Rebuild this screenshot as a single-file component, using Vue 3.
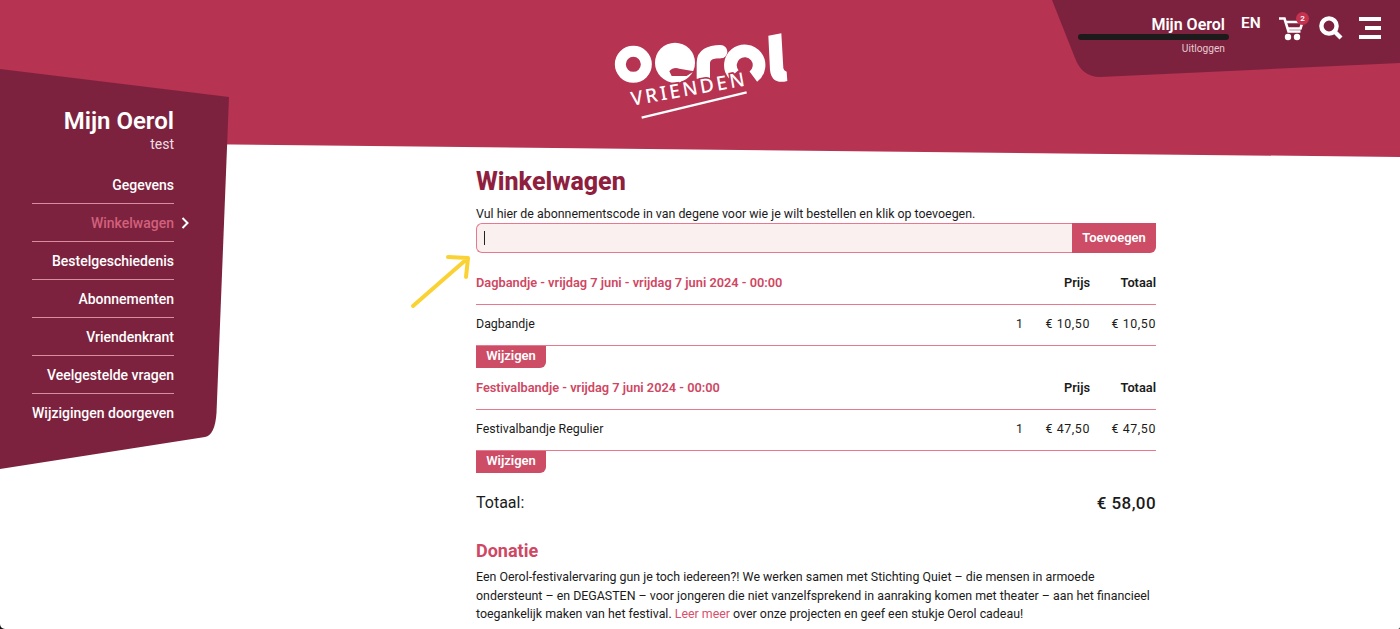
<script setup>
const menu = [
  { label: 'Gegevens' },
  { label: 'Winkelwagen', active: true },
  { label: 'Bestelgeschiedenis' },
  { label: 'Abonnementen' },
  { label: 'Vriendenkrant' },
  { label: 'Veelgestelde vragen' },
  { label: 'Wijzigingen doorgeven' },
]
const groups = [
  { title: 'Dagbandje - vrijdag 7 juni - vrijdag 7 juni 2024 - 00:00', name: 'Dagbandje', qty: 1, price: '€ 10,50', total: '€ 10,50' },
  { title: 'Festivalbandje - vrijdag 7 juni 2024 - 00:00', name: 'Festivalbandje Regulier', qty: 1, price: '€ 47,50', total: '€ 47,50' },
]
</script>

<template>
  <div class="page">
    <svg class="bg" width="1400" height="629" viewBox="0 0 1400 629" aria-hidden="true">
      <path d="M0 0H1400V157L0 142Z" fill="#b63352" />
      <path d="M1052 0H1400V63L1100 77Q1082 77 1075 58Z" fill="#7c223e" />
    </svg>

    <header class="top">
      <div class="user">
        <strong>Mijn Oerol</strong>
        <span class="redact"></span>
        <small>Uitloggen</small>
      </div>
      <span class="lang">EN</span>
      <div class="cart">
        <svg width="28" height="28" viewBox="0 0 28 28">
          <path d="M1 4.500H6.500L10.500 17.500H22.500" fill="none" stroke="#fff" stroke-width="2.600" />
          <path d="M8 8H24.500L22.500 14.500H10" fill="none" stroke="#fff" stroke-width="2.600" />
          <circle cx="10" cy="23" r="3.200" fill="#fff" />
          <circle cx="19" cy="23" r="3.200" fill="#fff" />
        </svg>
        <span class="badge">2</span>
      </div>
      <svg class="search" width="24" height="24" viewBox="0 0 24 24">
        <circle cx="10" cy="10" r="7.600" fill="none" stroke="#fff" stroke-width="4.400" />
        <path d="M15.500 15.500L22 22" stroke="#fff" stroke-width="4.200" />
      </svg>
      <div class="burger"><i></i><i class="short"></i><i></i></div>
    </header>

    <svg class="logo" width="220" height="110" viewBox="0 0 660 330" role="img" aria-label="Oerol Vrienden">
      <circle cx="130" cy="133" r="39" fill="none" stroke="#fff" stroke-width="33" />
      <circle cx="255" cy="128" r="60" fill="#fff" />
      <path d="M238 154Q250 140 268 146L312 154L290 168L245 168Z" fill="#b63352" />
      <path d="M340 176V128Q340 95 392 95" fill="none" stroke="#fff" stroke-width="40" />
      <circle cx="392" cy="95" r="20" fill="#fff" />
      <path d="M431 163A43 43 0 1 1 490 170" fill="none" stroke="#fff" stroke-width="38" />
      <path d="M535 47L574 40L580 145Q581 152 590 155L592 183Q545 195 540 150Z" fill="#fff" />
      <text class="vrienden" x="0" y="0" transform="translate(127 257) rotate(-10)" textLength="345" lengthAdjust="spacing">VRIENDEN</text>
      <path d="M155 293L470 217" stroke="#fff" stroke-width="7" />
    </svg>

    <div class="layout">
      <aside class="side">
        <h2>Mijn Oerol</h2>
        <p class="sub">test</p>
        <ul>
          <li v-for="m in menu" :key="m.label" :class="{ active: m.active }">
            {{ m.label }}
            <svg v-if="m.active" class="chev" width="8" height="12" viewBox="0 0 8 12">
              <path d="M1.500 1L6.500 6L1.500 11" fill="none" stroke="#fff" stroke-width="2" />
            </svg>
          </li>
        </ul>
      </aside>

      <main class="main">
        <h1>Winkelwagen</h1>
        <p class="intro">Vul hier de abonnementscode in van degene voor wie je wilt bestellen en klik op toevoegen.</p>
        <div class="field">
          <div class="input"><span class="caret"></span></div>
          <button class="add">Toevoegen</button>
          <svg class="arrow" width="64" height="60" viewBox="0 0 64 60" aria-hidden="true">
            <path d="M3 54L58 6M38 5L58 6L56 25" fill="none" stroke="#fbd233" stroke-width="4" stroke-linecap="round" stroke-linejoin="round" />
          </svg>
        </div>

        <section v-for="g in groups" :key="g.title" class="group">
          <div class="row head">
            <span class="title">{{ g.title }}</span>
            <span class="price">Prijs</span>
            <span class="total">Totaal</span>
          </div>
          <div class="row item">
            <span class="name">{{ g.name }}</span>
            <span class="qty">{{ g.qty }}</span>
            <span class="price">{{ g.price }}</span>
            <span class="total">{{ g.total }}</span>
          </div>
          <button class="edit">Wijzigen</button>
        </section>

        <div class="sum"><span class="sum-label">Totaal:</span><span class="sum-value">€ 58,00</span></div>

        <h3>Donatie</h3>
        <p class="text">Een Oerol-festivalervaring gun je toch iedereen?! We werken samen met Stichting Quiet – die mensen in armoede ondersteunt – en DEGASTEN – voor jongeren die niet vanzelfsprekend in aanraking komen met theater – aan het financieel toegankelijk maken van het festival. <a>Leer meer</a> over onze projecten en geef een stukje Oerol cadeau!</p>
      </main>
    </div>
  </div>
</template>

<style>
html, body { margin: 0; overflow: hidden; background: #111; }
</style>

<style scoped>
.page {
  position: relative;
  width: 1400px;
  height: 629px;
  overflow: hidden;
  background: #fff;
  border-radius: 0 0 2px 5px;
  font-family: Roboto, "Noto Sans", sans-serif;
  font-size: 12.400px;
  color: #1b1b1b;
}
.bg { position: absolute; left: 0; top: 0; }

.top {
  position: absolute;
  top: 0;
  right: 0;
  height: 50px;
  display: flex;
  align-items: flex-start;
  color: #fff;
}
.user {
  width: 147px;
  margin-right: 16px;
  padding-top: 15px;
  display: flex;
  flex-direction: column;
  align-items: flex-end;
}
.user strong { font-size: 16px; line-height: 20px; font-weight: 600; }
.redact { width: 151px; height: 6px; margin: -1px -4px 0 0; border-radius: 3px; background: #1d1a1c; }
.user small { font-size: 10.200px; line-height: 13px; margin-top: 2px; color: #e7c9d2; }
.lang { margin-top: 13px; font-size: 15.500px; line-height: 20px; font-weight: 600; width: 37px; }
.cart { position: relative; width: 41px; margin-top: 14px; }
.badge {
  position: absolute;
  left: 18px;
  top: -2px;
  width: 13px;
  height: 13px;
  border-radius: 50%;
  background: #c4324f;
  font-size: 8px;
  line-height: 13px;
  text-align: center;
  font-weight: 600;
}
.search { margin-top: 16px; margin-right: 16px; }
.burger { width: 22px; margin: 17px 19px 0 0; display: flex; flex-direction: column; align-items: flex-end; gap: 5px; }
.burger i { display: block; width: 22px; height: 4px; background: #fff; }
.burger i.short { width: 16px; }

.logo { position: absolute; left: 590px; top: 20px; }
.vrienden {
  fill: #fff;
  font-family: "Noto Sans", sans-serif;
  font-size: 58px;
  font-weight: 500;
  paint-order: stroke;
  stroke: #b63352;
  stroke-width: 10px;
}

.layout { position: relative; display: flex; align-items: flex-start; }

.side {
  width: 229px;
  height: 400px;
  margin-top: 69px;
  box-sizing: border-box;
  padding: 37px 55px 0 32px;
  background: #7c223e;
  color: #fff;
  text-align: right;
  clip-path: path("M0 0L229 28L216.500 344Q215 366 205 368L0 400Z");
}
.side h2 { margin: 0; font-size: 24px; line-height: 30px; font-weight: 600; }
.side .sub { margin: -1px 0 0; font-size: 14px; line-height: 18px; color: #efdfe4; }
.side ul { list-style: none; margin: 13px 0 0; padding: 0; }
.side li {
  position: relative;
  height: 38px;
  line-height: 38px;
  font-size: 14px;
  font-weight: 500;
  white-space: nowrap;
  border-bottom: 1px solid #d98da0;
  box-sizing: border-box;
}
.side li:last-child { border-bottom: 0; }
.side li.active { color: #d2607c; }
.chev { position: absolute; right: -15px; top: 13px; }

.main { width: 680px; margin-left: 247px; padding-top: 166px; }
h1 { margin: 0; font-size: 25px; line-height: 32px; font-weight: 800; color: #8f1f3f; }
.intro { margin: 8px 0 0; line-height: 16px; }
.field { position: relative; display: flex; height: 30px; margin-top: 1px; }
.input {
  flex: 1;
  box-sizing: border-box;
  border: 1px solid #e8788e;
  border-right: 0;
  border-radius: 6px 0 0 6px;
  background: #fbf0f0;
  padding: 7px 0 0 7px;
}
.caret { display: block; width: 1px; height: 14px; background: #222; }
.add {
  width: 84px;
  border: 0;
  border-radius: 0 0 6px 0;
  background: #cd4c66;
  color: #fff;
  font: 600 13px Roboto, sans-serif;
  padding: 0 0 2px;
}
.arrow { position: absolute; left: -66px; top: 29px; }

.group { display: block; }
.row { display: flex; align-items: center; box-sizing: border-box; border-bottom: 1px solid #e8788e; }
.head { height: 52px; padding-top: 8px; font-weight: 600; font-size: 12.800px; }
.item { height: 41px; padding-bottom: 3px; }
.item .price, .item .total { letter-spacing: 0.6px; }
.title { flex: 1; color: #cf4763; }
.name { flex: 1; }
.qty { width: 10px; text-align: right; }
.price { width: 67px; text-align: right; }
.total { width: 66px; text-align: right; }
.edit {
  display: block;
  width: 70px;
  height: 22px;
  border: 0;
  padding: 0 0 3px;
  border-radius: 0 0 6px 0;
  background: #cd4c66;
  color: #fff;
  font: 600 13px Roboto, sans-serif;
}
.group + .group .head { height: 42px; padding-top: 0; padding-bottom: 2px; }

.sum { display: flex; justify-content: space-between; align-items: center; margin-top: 17px; font-size: 16px; line-height: 24px; }
.sum-label { padding-top: 1px; }
.sum-value { font-size: 17px; font-weight: 500; letter-spacing: 0.4px; }
h3 { margin: 24px 0 0; font-size: 18px; line-height: 24px; font-weight: 700; color: #cf4763; }
.text { margin: 5px 0 0; line-height: 18.500px; }
.text a { color: #d9506c; }
</style>
